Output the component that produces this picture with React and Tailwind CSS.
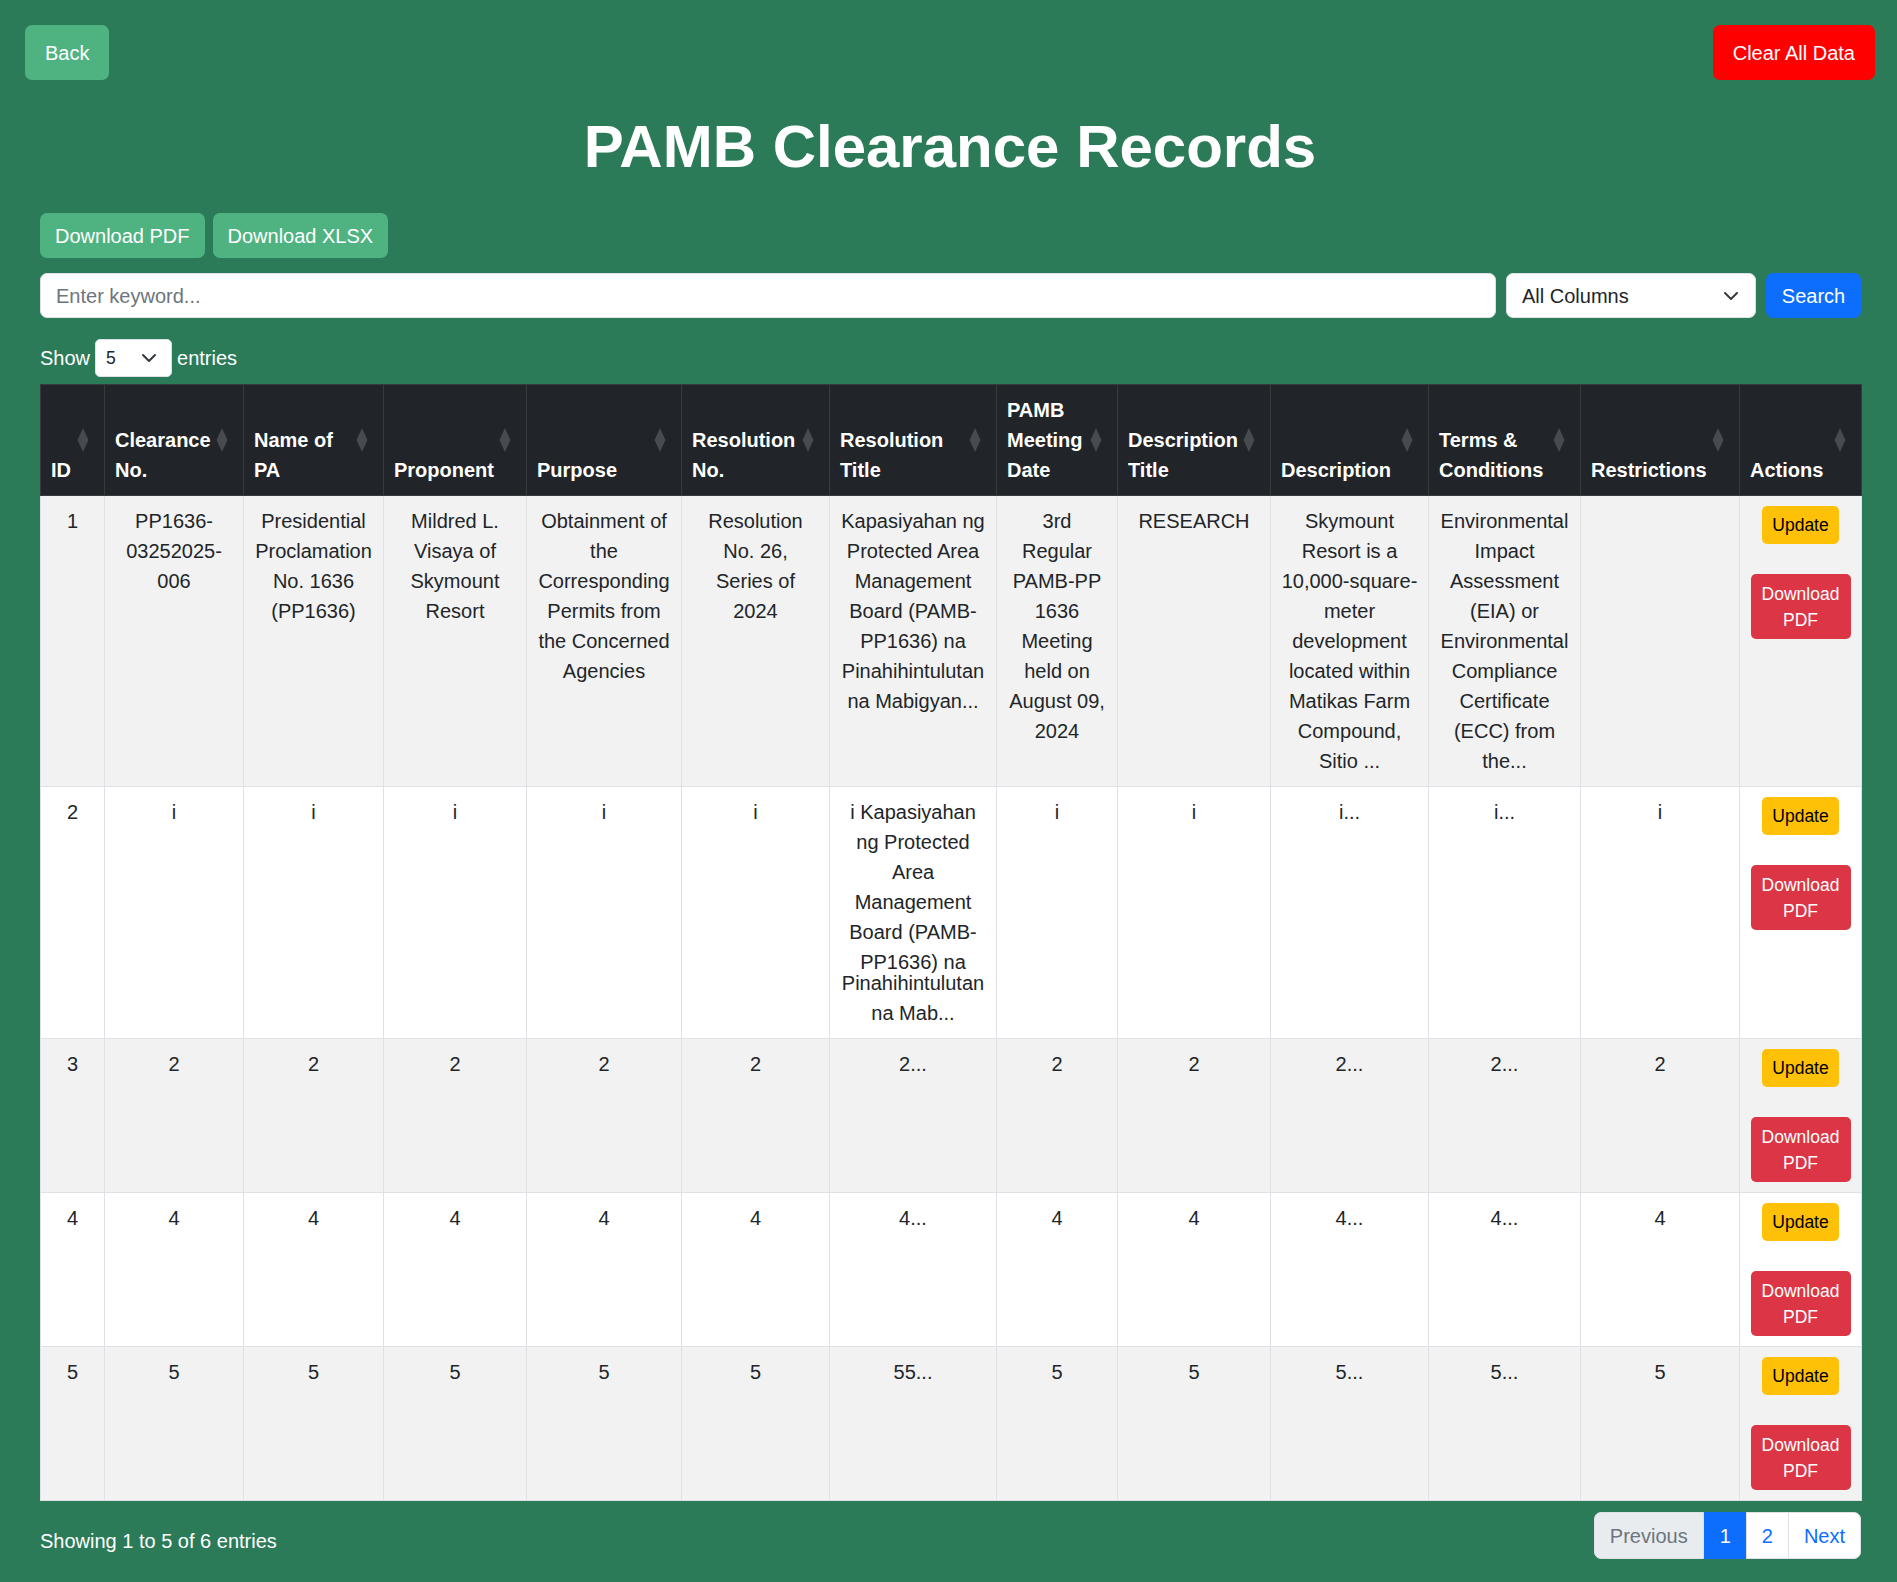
import React from "react";

const cols = [64, 139, 140, 143, 155, 148, 167, 121, 153, 158, 152, 159, 122];

const headers = [
  ["ID"],
  ["Clearance", "No."],
  ["Name of", "PA"],
  ["Proponent"],
  ["Purpose"],
  ["Resolution", "No."],
  ["Resolution", "Title"],
  ["PAMB", "Meeting", "Date"],
  ["Description", "Title"],
  ["Description"],
  ["Terms &", "Conditions"],
  ["Restrictions"],
  ["Actions"],
];

const rows = [
  [
    ["1"],
    ["PP1636-", "03252025-", "006"],
    ["Presidential", "Proclamation", "No. 1636", "(PP1636)"],
    ["Mildred L.", "Visaya of", "Skymount", "Resort"],
    ["Obtainment of", "the", "Corresponding", "Permits from", "the Concerned", "Agencies"],
    ["Resolution", "No. 26,", "Series of", "2024"],
    ["Kapasiyahan ng", "Protected Area", "Management", "Board (PAMB-", "PP1636) na", "Pinahihintulutan", "na Mabigyan..."],
    ["3rd", "Regular", "PAMB-PP", "1636", "Meeting", "held on", "August 09,", "2024"],
    ["RESEARCH"],
    ["Skymount", "Resort is a", "10,000-square-", "meter", "development", "located within", "Matikas Farm", "Compound,", "Sitio ..."],
    ["Environmental", "Impact", "Assessment", "(EIA) or", "Environmental", "Compliance", "Certificate", "(ECC) from", "the..."],
    [""],
  ],
  [
    ["2"],
    ["i"],
    ["i"],
    ["i"],
    ["i"],
    ["i"],
    "special",
    ["i"],
    ["i"],
    ["i..."],
    ["i..."],
    ["i"],
  ],
  [["3"], ["2"], ["2"], ["2"], ["2"], ["2"], ["2..."], ["2"], ["2"], ["2..."], ["2..."], ["2"]],
  [["4"], ["4"], ["4"], ["4"], ["4"], ["4"], ["4..."], ["4"], ["4"], ["4..."], ["4..."], ["4"]],
  [["5"], ["5"], ["5"], ["5"], ["5"], ["5"], ["55..."], ["5"], ["5"], ["5..."], ["5..."], ["5"]],
];

function SortIcon() {
  return (
    <svg
      className="absolute right-[15px] top-1/2 -translate-y-1/2"
      width="12"
      height="24"
      viewBox="0 0 12 24"
    >
      <polygon points="6,0 11.5,12 6,24 0.5,12" fill="#474b50" />
    </svg>
  );
}

function Lines({ lines }) {
  return lines.map((l, i) => (
    <React.Fragment key={i}>
      {i > 0 && <br />}
      {l}
    </React.Fragment>
  ));
}

function Chevron({ className }) {
  return (
    <svg className={className} width="16" height="16" viewBox="0 0 16 16" fill="none">
      <path d="M2 5l6 6 6-6" stroke="#343a40" strokeWidth="2" strokeLinecap="round" strokeLinejoin="round" />
    </svg>
  );
}

export default function App() {
  return (
    <div className="min-h-[1582px] bg-[#2b7b59] pl-[25px] pr-[22px] pt-[25px] pb-[20px] font-['Liberation_Sans',Arial,sans-serif] text-[20px] leading-[30px] text-[#212529]">
      <div className="flex justify-between">
        <button className="h-[55px] px-[20px] rounded-[7px] bg-[#4fb381] text-white text-[20px] leading-[30px]">
          Back
        </button>
        <button className="h-[55px] px-[20px] rounded-[7px] bg-[#ff0000] text-white text-[20px] leading-[30px]">
          Clear All Data
        </button>
      </div>

      <h1 className="mt-[31px] text-center text-[60px] leading-[71px] font-bold text-white">
        PAMB Clearance Records
      </h1>

      <div className="pl-[15px] pr-[14px]">
        <div className="mt-[31px] flex gap-[8px]">
          <button className="h-[45px] px-[15px] rounded-[7px] bg-[#4fb381] text-white">Download PDF</button>
          <button className="h-[45px] px-[15px] rounded-[7px] bg-[#4fb381] text-white">Download XLSX</button>
        </div>

        <div className="mt-[15px] flex gap-[10px]">
          <div className="flex-1 h-[45px] rounded-[7px] bg-white border border-[#dee2e6] flex items-center pl-[15px] text-[#6c757d]">
            Enter keyword...
          </div>
          <div className="w-[250px] h-[45px] rounded-[7px] bg-white border border-[#dee2e6] flex items-center justify-between pl-[15px] pr-[16px] text-[#212529]">
            <span>All Columns</span>
            <Chevron />
          </div>
          <button className="w-[95px] h-[45px] rounded-[7px] bg-[#0d6efd] text-white">Search</button>
        </div>

        <div className="mt-[21px] flex items-center text-white">
          <span>Show</span>
          <div className="ml-[5px] mr-[5px] w-[77px] h-[38px] rounded-[5px] bg-white border border-[#dee2e6] flex items-center justify-between pl-[10px] pr-[14px] text-[17.5px] text-[#212529]">
            <span>5</span>
            <Chevron />
          </div>
          <span>entries</span>
        </div>

        <table className="mt-[7px] w-[1821px] table-fixed border-collapse">
          <colgroup>
            {cols.map((w, i) => (
              <col key={i} style={{ width: w }} />
            ))}
          </colgroup>
          <thead>
            <tr>
              {headers.map((h, i) => (
                <th
                  key={i}
                  className="relative bg-[#212529] text-white font-bold text-left align-bottom px-[10px] py-[10px] border border-[#373b3e] whitespace-nowrap"
                >
                  <Lines lines={h} />
                  <SortIcon />
                </th>
              ))}
            </tr>
          </thead>
          <tbody>
            {rows.map((r, ri) => (
              <tr key={ri} className={ri % 2 === 0 ? "bg-[#f2f2f2]" : "bg-white"}>
                {r.map((c, ci) => (
                  <td
                    key={ci}
                    className="align-top text-center px-[10px] py-[10px] border border-[#dee2e6] whitespace-nowrap"
                  >
                    {c === "special" ? (
                      <>
                        <div>
                          <Lines lines={["i Kapasiyahan", "ng Protected", "Area", "Management", "Board (PAMB-", "PP1636) na"]} />
                        </div>
                        <div className="-mt-[9px]">
                          <Lines lines={["Pinahihintulutan", "na Mab..."]} />
                        </div>
                      </>
                    ) : (
                      <Lines lines={c} />
                    )}
                  </td>
                ))}
                <td className="align-top px-[10px] pt-[10px] pb-[10px] border border-[#dee2e6]">
                  <div className="flex flex-col items-center gap-[30px]">
                    <button className="h-[38px] px-[10px] rounded-[5px] bg-[#ffc107] text-black text-[17.5px] leading-[26px]">
                      Update
                    </button>
                    <button className="w-[100px] h-[65px] rounded-[5px] bg-[#dc3545] text-white text-[17.5px] leading-[26px]">
                      Download
                      <br />
                      PDF
                    </button>
                  </div>
                </td>
              </tr>
            ))}
          </tbody>
        </table>

        <div className="mt-[11px] flex justify-between items-start">
          <div className="pt-[14px] text-white">Showing 1 to 5 of 6 entries</div>
          <div className="flex h-[47px]">
            <span className="flex items-center px-[15px] bg-[#e9ecef] text-[#6c757d] border border-[#dee2e6] rounded-l-[7px]">
              Previous
            </span>
            <span className="flex items-center px-[15px] bg-[#0d6efd] text-white border border-[#0d6efd]">1</span>
            <span className="flex items-center px-[15px] bg-white text-[#0d6efd] border border-[#dee2e6] -ml-px">2</span>
            <span className="flex items-center px-[15px] bg-white text-[#0d6efd] border border-[#dee2e6] -ml-px rounded-r-[7px]">
              Next
            </span>
          </div>
        </div>
      </div>
    </div>
  );
}
